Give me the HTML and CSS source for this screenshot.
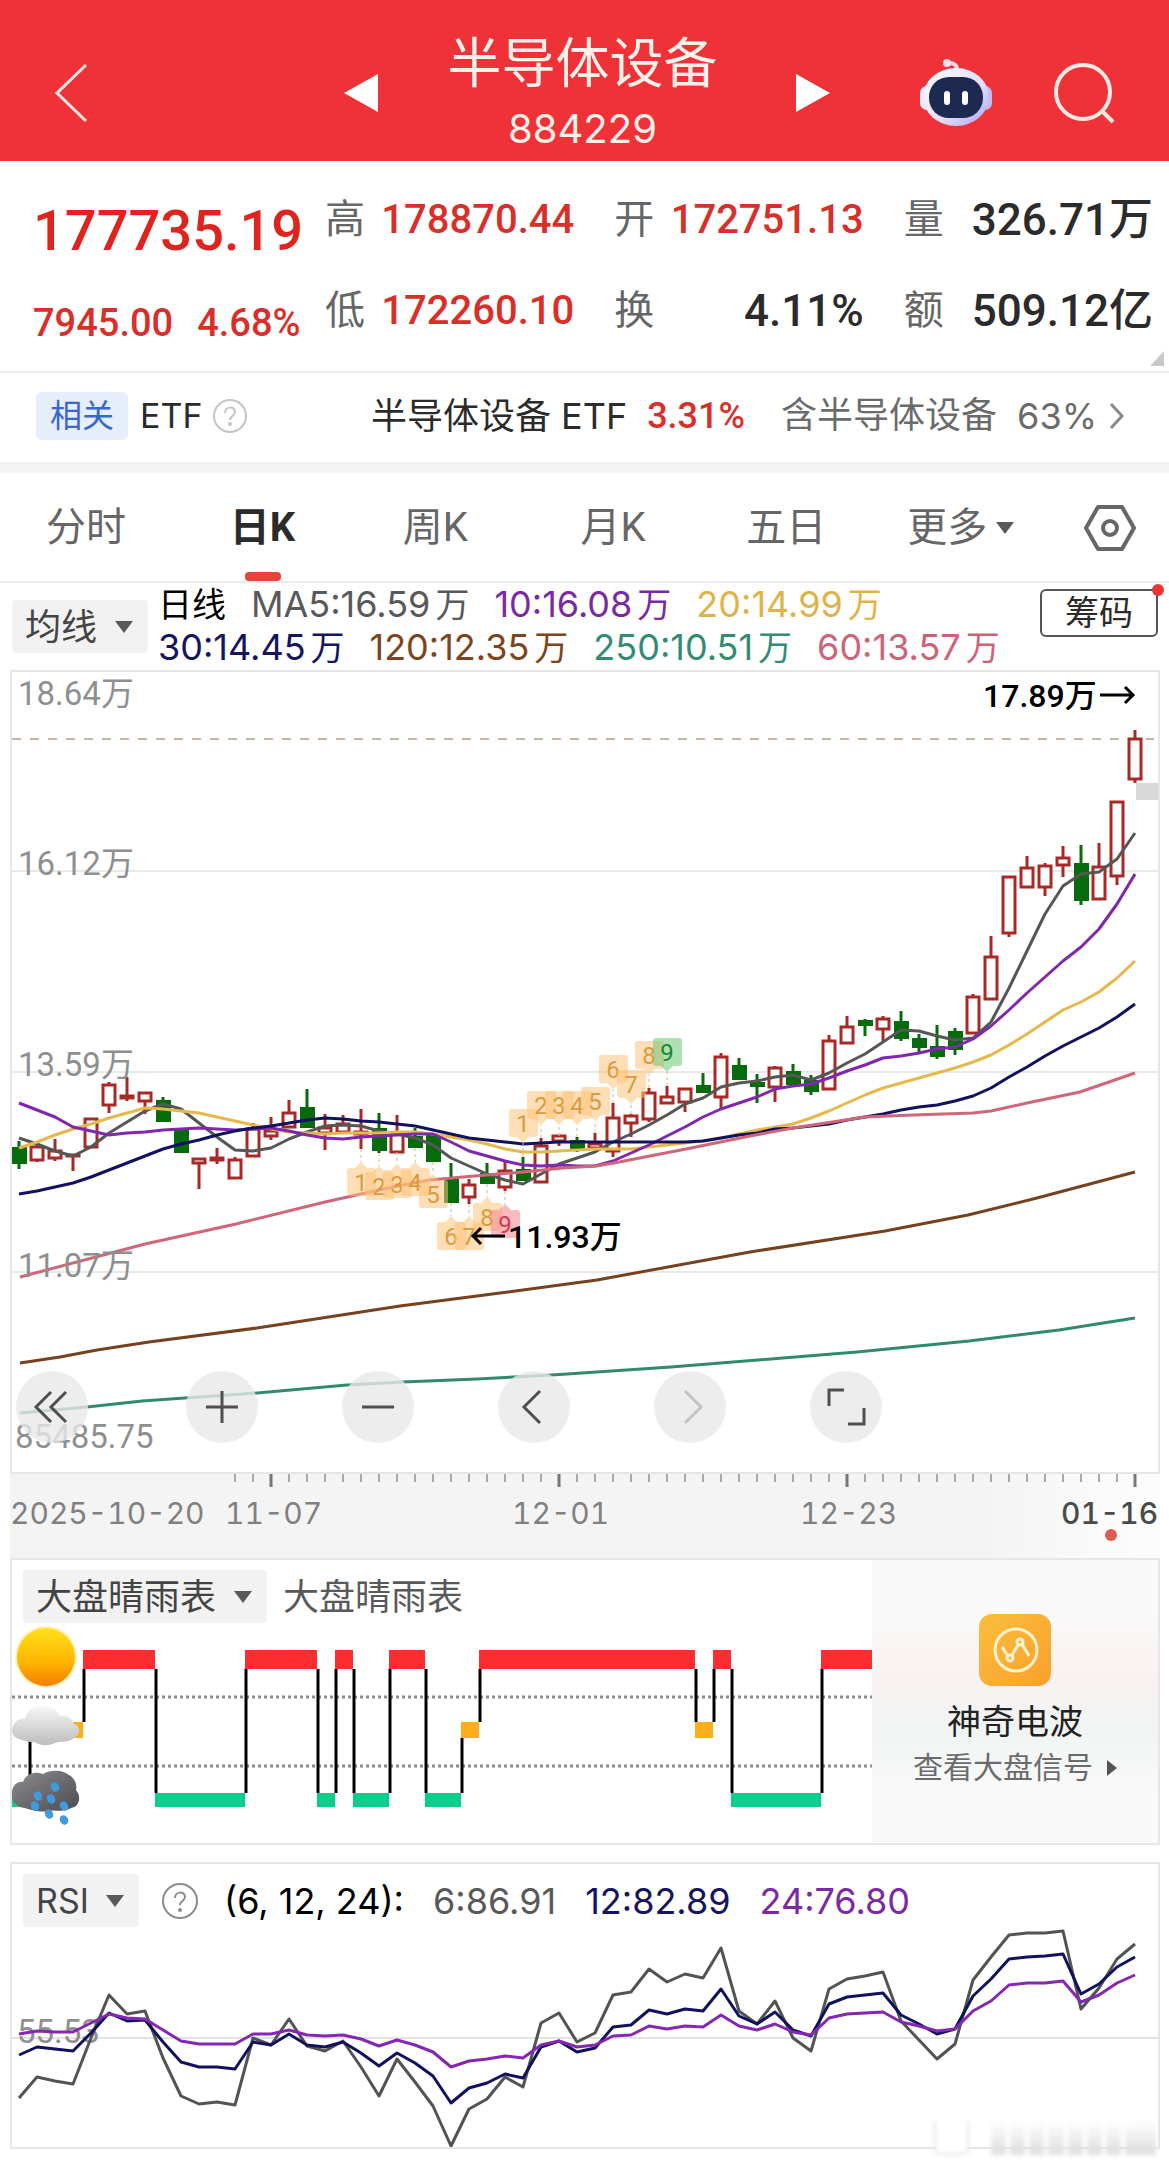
FILE: index.html
```html
<!DOCTYPE html>
<html lang="zh-CN">
<head>
    <meta charset="UTF-8">
    <meta name="viewport" content="width=device-width, initial-scale=1.0">
    <title>半导体设备 884229</title>
    <link rel="stylesheet" href="styles.css">
</head>
<body>

<header class="top-bar">
    <button class="icon-btn back-btn" aria-label="返回">
        <svg width="36" height="60" viewBox="0 0 36 60"><path d="M32 2 L3 30 L32 58" fill="none" stroke="#ffe9e2" stroke-width="3"/></svg>
    </button>
    <div class="switcher">
        <button class="icon-btn" aria-label="上一个">
            <svg width="34" height="38" viewBox="0 0 34 38"><path d="M34 0 V38 L0 19 Z" fill="#fff"/></svg>
        </button>
        <div class="title-block">
            <h1>半导体设备</h1>
            <p>884229</p>
        </div>
        <button class="icon-btn" aria-label="下一个">
            <svg width="34" height="38" viewBox="0 0 34 38"><path d="M0 0 V38 L34 19 Z" fill="#fff"/></svg>
        </button>
    </div>
    <div class="top-tools">
        <button class="icon-btn" aria-label="智能助手">
            <svg width="74" height="70" viewBox="0 0 74 70">
                <defs>
                    <linearGradient id="shell" x1="0" y1="0" x2="1" y2="1">
                        <stop offset="0" stop-color="#ffffff"/>
                        <stop offset="0.6" stop-color="#e3dcfb"/>
                        <stop offset="1" stop-color="#a9a0f4"/>
                    </linearGradient>
                </defs>
                <path d="M36 14 C40 9 37 5 29 5" fill="none" stroke="#f6d6e8" stroke-width="4"/>
                <circle cx="28" cy="5" r="4" fill="#fbdbe8"/>
                <rect x="1" y="28" width="14" height="24" rx="7" fill="#efe8fb"/>
                <rect x="59" y="28" width="14" height="24" rx="7" fill="#c3b9f6"/>
                <ellipse cx="37" cy="39" rx="33" ry="29" fill="url(#shell)"/>
                <rect x="10" y="19" width="54" height="41" rx="20" fill="#1b2a4e"/>
                <rect x="25" y="33" width="6" height="14" rx="3" fill="#fff"/>
                <rect x="43" y="33" width="6" height="14" rx="3" fill="#fff"/>
            </svg>
        </button>
        <button class="icon-btn" aria-label="搜索">
            <svg width="66" height="64" viewBox="0 0 66 64"><circle cx="30" cy="31" r="27" fill="none" stroke="#ffe9e2" stroke-width="4"/><path d="M48 49 L60 61" stroke="#ffe9e2" stroke-width="4"/></svg>
        </button>
    </div>
</header>

<section class="quote">
    <div class="quote-main">
        <div class="price">177735.19</div>
        <div class="change"><span>7945.00</span><span>4.68%</span></div>
    </div>
    <dl class="quote-grid">
        <div><dt>高</dt><dd class="up">178870.44</dd></div>
        <div><dt>开</dt><dd class="up">172751.13</dd></div>
        <div><dt>量</dt><dd>326.71万</dd></div>
        <div><dt>低</dt><dd class="up">172260.10</dd></div>
        <div><dt>换</dt><dd>4.11%</dd></div>
        <div><dt>额</dt><dd>509.12亿</dd></div>
    </dl>
    <span class="corner"></span>
</section>

<section class="related">
    <span class="tag">相关</span>
    <span class="etf">ETF</span>
    <svg class="help" width="36" height="36" viewBox="0 0 36 36"><circle cx="18" cy="18" r="16" fill="none" stroke="#c4c4c4" stroke-width="2"/><path d="M13 15 C13 8 23 8 23 14 C23 18 18 18 18 22" fill="none" stroke="#c4c4c4" stroke-width="2"/><circle cx="18" cy="26" r="2" fill="#c4c4c4"/></svg>
    <a class="fund" href="#">半导体设备 ETF</a>
    <span class="fund-pct">3.31%</span>
    <a class="holding" href="#">含半导体设备<span>63%</span>
        <svg width="16" height="28" viewBox="0 0 16 28"><path d="M2 2 L13 14 L2 26" fill="none" stroke="#888" stroke-width="3"/></svg>
    </a>
</section>

<nav class="tabs">
    <button>分时</button>
    <button class="active">日K</button>
    <button>周K</button>
    <button>月K</button>
    <button>五日</button>
    <button>更多<i class="caret small"></i></button>
    <button class="settings" aria-label="设置">
        <svg width="52" height="46" viewBox="0 0 52 46"><path d="M14 2 H38 L50 23 L38 44 H14 L2 23 Z" fill="none" stroke="#666" stroke-width="4" stroke-linejoin="round"/><circle cx="26" cy="23" r="7" fill="none" stroke="#666" stroke-width="4"/></svg>
    </button>
</nav>

<section class="legend">
    <label class="picker">
        <select aria-label="主图指标"><option>均线</option></select>
        <i class="caret"></i>
    </label>
    <div class="ma-list">
        <div class="ma-row">
            <span class="black day">日线</span>
            <span class="c5">MA5:16.59<b>万</b></span>
            <span class="c10">10:16.08<b>万</b></span>
            <span class="c20">20:14.99<b>万</b></span>
        </div>
        <div class="ma-row">
            <span class="c30">30:14.45<b>万</b></span>
            <span class="c120">120:12.35<b>万</b></span>
            <span class="c250">250:10.51<b>万</b></span>
            <span class="c60">60:13.57<b>万</b></span>
        </div>
    </div>
    <button class="chips">筹码</button>
</section>

<section class="panel k-panel">
    <svg id="kChart" viewBox="12 672 1146 800"></svg>
    <div class="k-tools">
        <button class="first" aria-label="最左"><svg width="40" height="40" viewBox="0 0 40 40"><path d="M19 5 L4 20 L19 35 M34 5 L19 20 L34 35"/></svg></button>
        <button aria-label="放大"><svg width="40" height="40" viewBox="0 0 40 40"><path d="M20 4 V36 M4 20 H36"/></svg></button>
        <button aria-label="缩小"><svg width="40" height="40" viewBox="0 0 40 40"><path d="M4 20 H36"/></svg></button>
        <button aria-label="左移"><svg width="40" height="40" viewBox="0 0 40 40"><path d="M26 4 L10 20 L26 36"/></svg></button>
        <button aria-label="右移" disabled><svg width="40" height="40" viewBox="0 0 40 40"><path d="M15 4 L31 20 L15 36"/></svg></button>
        <button aria-label="全屏"><svg width="40" height="40" viewBox="0 0 40 40"><path d="M3 19 V3 H18 M22 37 H38 V21"/></svg></button>
    </div>
</section>

<section class="date-axis">
    <svg id="dateAxis" viewBox="10 1474 1150 84"></svg>
</section>

<section class="panel weather">
    <div class="weather-main">
        <div class="panel-head">
            <label class="picker">
                <select aria-label="副图指标"><option>大盘晴雨表</option></select>
                <i class="caret"></i>
            </label>
            <span class="panel-name">大盘晴雨表</span>
        </div>
        <svg id="weatherChart" viewBox="12 1623 860 220">
            <defs>
                <linearGradient id="sun" x1="0" y1="0" x2="0" y2="1">
                    <stop offset="0" stop-color="#ffe11a"/>
                    <stop offset="0.6" stop-color="#ffb400"/>
                    <stop offset="1" stop-color="#f57c00"/>
                </linearGradient>
                <linearGradient id="cloud" x1="0" y1="0" x2="0" y2="1">
                    <stop offset="0" stop-color="#f7f7f7"/>
                    <stop offset="1" stop-color="#bdbdbd"/>
                </linearGradient>
                <linearGradient id="storm" x1="0" y1="0" x2="1" y2="1">
                    <stop offset="0" stop-color="#8d8d90"/>
                    <stop offset="1" stop-color="#4b4b50"/>
                </linearGradient>
            </defs>
            <g id="weatherBars"></g>
            <circle cx="46" cy="1657" r="31" fill="#ffe27a" opacity="0.5"/>
            <circle cx="46" cy="1657" r="29" fill="url(#sun)"/>
            <path d="M12 1731 C12 1722 19 1718 25 1719 C27 1708 38 1704 47 1707 C53 1707 58 1712 60 1716 C68 1715 73 1719 74 1724 C81 1725 81 1736 74 1738 C70 1743 58 1741 55 1743 C47 1747 38 1745 35 1742 C28 1743 22 1740 20 1739 C15 1738 12 1735 12 1731 Z" fill="url(#cloud)"/>
            <path d="M12 1796 C11 1786 17 1781 23 1782 C26 1773 36 1771 43 1774 C51 1769 63 1770 69 1775 C76 1779 77 1786 76 1790 C82 1797 79 1807 71 1808 C64 1813 53 1809 49 1811 C38 1813 29 1809 25 1808 C16 1807 12 1802 12 1796 Z" fill="url(#storm)"/>
            <g id="drops" fill="#3f9be0"></g>
        </svg>
    </div>
    <a class="wave-card" href="#">
        <svg width="72" height="72" viewBox="0 0 72 72">
            <defs>
                <linearGradient id="wave" x1="0" y1="0" x2="1" y2="1">
                    <stop offset="0" stop-color="#fbbe3c"/>
                    <stop offset="1" stop-color="#f9a02c"/>
                </linearGradient>
            </defs>
            <rect width="72" height="72" rx="13" fill="url(#wave)"/>
            <circle cx="37" cy="36" r="21" fill="none" stroke="#fff3cf" stroke-width="3"/>
            <path d="M23 33 L29 42 M33 41 L39 31 M43 30 L50 42" fill="none" stroke="#fff3cf" stroke-width="3"/>
            <circle cx="31" cy="44" r="3" fill="none" stroke="#fff3cf" stroke-width="3"/>
            <circle cx="41" cy="28" r="3" fill="none" stroke="#fff3cf" stroke-width="3"/>
        </svg>
        <strong>神奇电波</strong>
        <span>查看大盘信号<i class="caret-right"></i></span>
    </a>
</section>

<section class="panel rsi">
    <div class="panel-head">
        <label class="picker">
            <select aria-label="RSI指标"><option>RSI</option></select>
            <i class="caret"></i>
        </label>
        <svg class="rsi-help" width="38" height="38" viewBox="0 0 38 38"><circle cx="19" cy="19" r="17" fill="none" stroke="#8c8c8c" stroke-width="2"/><path d="M14 16 C14 9 24 9 24 15 C24 19 19 19 19 23" fill="none" stroke="#8c8c8c" stroke-width="2"/><circle cx="19" cy="28" r="2" fill="#8c8c8c"/></svg>
        <span class="black">(6, 12, 24):</span>
        <span class="c5">6:86.91</span>
        <span class="c30">12:82.89</span>
        <span class="c10">24:76.80</span>
    </div>
    <svg id="rsiChart" viewBox="12 1927 1146 220"></svg>
    <div class="watermark"><i></i><i></i><i></i><i></i><i></i><i></i><i></i><i></i><i></i></div>
</section>

<script src="script.js"></script>
</body>
</html>
```
FILE: styles.css
```css
* {
    box-sizing: border-box;
}
body {
    margin: 0;
    background: #fff;
    color: #2b2b2b;
    font-family: Roboto, "Noto Sans CJK SC", sans-serif;
}
h1, p, dl, dd {
    margin: 0;
}
button {
    border: none;
    background: none;
    padding: 0;
    font: inherit;
    color: inherit;
    cursor: pointer;
}
a {
    color: inherit;
    text-decoration: none;
}
svg {
    display: block;
}

/* header */
.top-bar {
    display: grid;
    grid-template-columns: 1fr auto 1fr;
    align-items: center;
    height: 161px;
    padding: 24px 50px 0 54px;
    background: #ee3237;
    color: #fff1ea;
}
.back-btn {
    justify-self: start;
}
.switcher {
    display: flex;
    align-items: center;
}
.title-block {
    margin: -4px 78px 0 70px;
    text-align: center;
}
.title-block h1 {
    font-size: 54px;
    line-height: 76px;
    font-weight: 400;
}
.title-block p {
    font-family: Inter, sans-serif;
    font-size: 40px;
    line-height: 52px;
}
.top-tools {
    display: flex;
    align-items: center;
    justify-content: flex-end;
    gap: 60px;
}

/* quote */
.quote {
    position: relative;
    display: flex;
    height: 212px;
    padding: 0 16px 0 33px;
    border-bottom: 2px solid #ededed;
}
.quote-main {
    width: 292px;
    padding-top: 24px;
    color: #e0231c;
    font-weight: 500;
}
.price {
    font-size: 56px;
    line-height: 92px;
}
.change {
    display: flex;
    gap: 24px;
    font-size: 38px;
    line-height: 92px;
    color: #d92f2b;
}
.quote-grid {
    flex: 1;
    display: grid;
    grid-template-columns: repeat(3, 1fr);
    grid-auto-rows: 91px;
    column-gap: 40px;
    padding-top: 13px;
}
.quote-grid div {
    display: flex;
    align-items: center;
    justify-content: space-between;
    line-height: 48px;
    white-space: nowrap;
}
.quote-grid dt {
    font-size: 40px;
    color: #666;
}
.quote-grid dd {
    font-size: 44px;
    font-weight: 500;
}
.quote-grid .up {
    font-size: 40px;
    color: #d92f2b;
}
.corner {
    position: absolute;
    right: 5px;
    bottom: 5px;
    border-left: 14px solid transparent;
    border-bottom: 15px solid #c9c9c9;
}

/* related etf */
.related {
    display: flex;
    align-items: center;
    height: 100px;
    padding: 0 44px 4px 36px;
    border-bottom: 11px solid #f4f4f5;
    font-size: 36px;
    line-height: 44px;
    white-space: nowrap;
}
.tag {
    padding: 0 14px;
    border-radius: 6px;
    background: #e6edfb;
    color: #3668cf;
    font-size: 32px;
    line-height: 48px;
}
.etf {
    margin-left: 12px;
    font-family: Inter, sans-serif;
    font-size: 34px;
}
.help {
    margin-left: 10px;
}
.fund {
    margin-left: auto;
    font-family: Inter, "Noto Sans CJK SC", sans-serif;
}
.fund-pct {
    margin-left: 20px;
    color: #d92f2b;
    font-weight: 500;
}
.holding {
    display: flex;
    align-items: center;
    margin-left: 36px;
    color: #6b6b6b;
}
.holding span {
    margin: 0 12px 0 20px;
    font-family: Inter, sans-serif;
    font-size: 36px;
}

/* tabs */
.tabs {
    display: grid;
    grid-template-columns: 184fr 173fr 178fr 166fr 161fr 177fr 52fr;
    height: 110px;
    padding: 2px 33px 0 46px;
    border-bottom: 2px solid #ededed;
    font-size: 40px;
    line-height: 48px;
    color: #666;
}
.tabs button {
    position: relative;
    justify-self: start;
    white-space: nowrap;
}
.tabs .active {
    color: #2b2b2b;
    font-weight: 700;
}
.tabs .active::after {
    content: "";
    position: absolute;
    left: 50%;
    bottom: 0;
    width: 36px;
    height: 9px;
    margin-left: -18px;
    border-radius: 4px;
    background: #e8433a;
}
.caret {
    display: inline-block;
    border: 9px solid transparent;
    border-top: 12px solid #595959;
    border-bottom: none;
    pointer-events: none;
}
.caret.small {
    margin-left: 9px;
    vertical-align: 7px;
}

/* legend */
.legend {
    display: flex;
    align-items: flex-start;
    height: 87px;
    padding: 0 11px 0 12px;
}
.picker {
    position: relative;
    display: block;
    border-radius: 4px;
    background: #f2f2f2;
}
.picker select {
    display: block;
    height: 53px;
    padding: 0 50px 0 13px;
    border: none;
    background: transparent;
    appearance: none;
    color: #444;
    font-family: Inter, "Noto Sans CJK SC", sans-serif;
    font-size: 36px;
}
.picker .caret {
    position: absolute;
    right: 15px;
    top: 21px;
}
.legend .picker {
    margin-top: 17px;
}
.ma-list {
    flex: 1;
    padding-left: 10px;
}
.ma-row {
    display: flex;
    gap: 25px;
    font-family: Inter, "Noto Sans CJK SC", sans-serif;
    font-size: 36px;
    line-height: 43px;
    white-space: nowrap;
}
.ma-row b {
    margin-left: 5px;
    font-size: 34px;
    font-weight: 400;
}
.ma-row .day {
    font-size: 34px;
}
.black { color: #000; }
.c5 { color: #595959; }
.c10 { color: #7a2aa5; }
.c20 { color: #dfb34b; }
.c30 { color: #14145f; }
.c60 { color: #cc6478; }
.c120 { color: #7a4520; }
.c250 { color: #348b73; }
.chips {
    position: relative;
    width: 118px;
    height: 48px;
    margin-top: 6px;
    border: 2px solid #555;
    border-radius: 6px;
    font-size: 34px;
    line-height: 42px;
}
.chips::after {
    content: "";
    position: absolute;
    right: -8px;
    top: -7px;
    width: 12px;
    height: 12px;
    border-radius: 50%;
    background: #e33;
}

/* chart panels */
.panel {
    position: relative;
    margin: 0 9px 0 10px;
    border: 2px solid #e6e6e6;
}
.panel > svg,
.weather-main > svg,
.date-axis > svg {
    width: 100%;
    height: auto;
}
.k-tools {
    position: absolute;
    left: 4px;
    bottom: 29px;
    display: flex;
    gap: 84px;
}
.k-tools button {
    display: flex;
    align-items: center;
    justify-content: center;
    width: 72px;
    height: 72px;
    border-radius: 50%;
    background: rgba(232, 232, 232, 0.8);
}
.k-tools .first {
    margin-right: 14px;
}
.k-tools path {
    fill: none;
    stroke: #4f4f4f;
    stroke-width: 3;
}
.k-tools button:disabled path {
    stroke: #c4c4c4;
}
.date-axis {
    margin: 0 9px 0 10px;
    background: linear-gradient(to right, #f4f4f4 85%, #fdfdfd);
}
.panel-head {
    display: flex;
    align-items: center;
    height: 63px;
    padding: 10px 11px 0;
    font-family: Inter, "Noto Sans CJK SC", sans-serif;
    font-size: 36px;
    white-space: nowrap;
}
.panel-name {
    margin-left: 16px;
    line-height: 48px;
    color: #595959;
}
.weather {
    display: flex;
}
.weather-main {
    flex: 1;
}
.wave-card {
    display: flex;
    flex-direction: column;
    align-items: center;
    width: 286px;
    padding-top: 54px;
    background: linear-gradient(#f9f9f9 20%, #fbf1f1 40%, #f0f4f3 60%, #f9f9f9 80%);
}
.wave-card strong {
    margin-top: 12px;
    font-size: 34px;
    line-height: 48px;
    font-weight: 400;
    color: #222;
}
.wave-card span {
    display: flex;
    align-items: center;
    font-size: 30px;
    line-height: 44px;
    color: #6b6b6b;
}
.caret-right {
    margin-left: 14px;
    border: 8px solid transparent;
    border-left: 10px solid #555;
    border-right: none;
}
.rsi {
    margin-top: 17px;
    margin-bottom: 19px;
}
.rsi .picker select {
    font-size: 34px;
}
.rsi-help {
    margin: 0 25px 0 22px;
}
.rsi .panel-head .c5,
.rsi .panel-head .c30,
.rsi .panel-head .c10 {
    margin-left: 29px;
}
.watermark {
    position: absolute;
    right: 2px;
    bottom: -8px;
    display: flex;
    gap: 4px;
    width: 222px;
    height: 34px;
    filter: blur(2px);
}
.watermark i {
    flex: 1;
    background: linear-gradient(rgba(255, 255, 255, 0.6), #dedede);
}
.watermark i:first-child {
    flex: 2;
    margin-right: 18px;
    border: 2px solid #e2e2e2;
    border-top: none;
    border-radius: 0 0 6px 6px;
    background: #fff;
}
.watermark i:last-child {
    flex: 2;
}

/* svg text */
.axis-label {
    fill: #8f8f8f;
    font-family: Roboto, "Noto Sans CJK SC", sans-serif;
    font-size: 33px;
}
.peak-label {
    fill: #000;
    font-family: Roboto, "Noto Sans CJK SC", sans-serif;
    font-size: 32px;
    font-weight: 500;
}
.date-label {
    fill: #808080;
    font-family: Inter, sans-serif;
    font-size: 30px;
    font-variant-numeric: tabular-nums;
}
.date-label.current {
    fill: #4a4a4a;
    font-weight: 500;
}
.td-label {
    font-family: Roboto, sans-serif;
    font-size: 24px;
    text-anchor: middle;
}
```
FILE: script.js
```js
var NS = 'http://www.w3.org/2000/svg';
var STEP = 18;
var LEFT = 19;

function xAt(i) {
    return LEFT + STEP * i;
}

function add(parent, tag, attrs, text) {
    var el = document.createElementNS(NS, tag);
    for (var key in attrs) {
        el.setAttribute(key, attrs[key]);
    }
    if (text) el.textContent = text;
    parent.appendChild(el);
    return el;
}

function drawLine(svg, points, color, width) {
    add(svg, 'polyline', {
        points: points.map(function (p) { return p.join(','); }).join(' '),
        fill: 'none', stroke: color, 'stroke-width': width, 'stroke-linejoin': 'round'
    });
}

function drawSeries(svg, values, color, width) {
    drawLine(svg, values.map(function (v, i) { return [xAt(i), v]; }), color, width);
}

// [direction, body top, body bottom, high, low]
var candles = [
    ['g',1147,1164,1141,1169], ['r',1147,1160,1145,1162], ['r',1151,1158,1139,1161], ['r',1155,1156,1154,1171],
    ['r',1119,1147,1119,1147], ['r',1085,1105,1082,1113], ['r',1096,1098,1077,1101], ['r',1093,1101,1092,1114],
    ['g',1100,1122,1097,1122], ['g',1129,1153,1129,1153], ['r',1159,1163,1159,1189], ['r',1158,1160,1148,1164],
    ['r',1160,1178,1157,1178], ['r',1129,1156,1123,1156], ['r',1131,1136,1117,1140], ['r',1113,1127,1100,1127],
    ['g',1107,1128,1089,1128], ['r',1128,1133,1114,1150], ['r',1124,1132,1115,1132], ['r',1132,1134,1109,1149],
    ['g',1128,1151,1113,1153], ['r',1133,1152,1115,1152], ['g',1136,1148,1128,1148], ['g',1134,1162,1134,1162],
    ['g',1179,1203,1163,1203], ['r',1185,1197,1179,1204], ['g',1173,1184,1163,1184], ['r',1171,1187,1160,1191],
    ['g',1169,1181,1157,1181], ['r',1146,1182,1138,1183], ['r',1136,1141,1136,1146], ['g',1140,1149,1137,1152],
    ['r',1144,1148,1133,1148], ['r',1118,1151,1103,1157], ['r',1116,1123,1114,1137], ['r',1093,1119,1088,1122],
    ['r',1097,1103,1086,1103], ['r',1089,1102,1088,1112], ['g',1085,1093,1073,1093], ['r',1057,1097,1053,1109],
    ['g',1065,1080,1058,1080], ['g',1082,1087,1074,1103], ['r',1068,1087,1066,1102], ['g',1071,1085,1064,1085],
    ['g',1080,1092,1075,1095], ['r',1041,1089,1035,1089], ['r',1027,1043,1016,1043], ['g',1020,1026,1019,1036],
    ['r',1019,1029,1016,1041], ['g',1021,1039,1011,1041], ['g',1038,1048,1034,1053], ['g',1046,1057,1025,1059],
    ['g',1031,1050,1028,1055], ['r',997,1033,994,1033], ['r',957,999,936,999], ['r',877,933,876,937],
    ['r',868,887,856,887], ['r',866,887,863,896], ['r',858,865,846,877], ['g',863,901,845,905],
    ['r',867,899,843,899], ['r',802,876,801,885], ['r',739,779,730,783]
];

var ma5 = [1138,1144,1151,1156,1147,1133,1122,1111,1104,1109,1123,1137,1150,1151,1148,1139,1132,1126,1125,1126,1131,
    1134,1138,1145,1158,1166,1174,1180,1184,1174,1164,1158,1152,1142,1134,1125,1115,1104,1098,1087,1083,1081,
    1077,1075,1080,1073,1063,1054,1042,1030,1031,1036,1040,1038,1022,988,951,914,886,874,872,859,833];
var ma10 = [1103,1110,1117,1127,1131,1135,1133,1132,1130,1129,1128,1129,1130,1129,1128,1131,1135,1138,1139,1137,1136,
    1135,1134,1134,1142,1151,1156,1161,1165,1166,1165,1166,1166,1161,1153,1145,1136,1127,1117,1109,1103,1097,
    1089,1086,1084,1078,1071,1065,1058,1056,1053,1049,1047,1039,1026,1010,993,977,961,947,929,904,874];
var ma20 = [1148,1142,1135,1129,1124,1118,1113,1108,1109,1111,1113,1117,1121,1125,1129,1132,1133,1134,1133,1133,1133,
    1132,1132,1134,1137,1140,1144,1149,1152,1152,1151,1150,1149,1149,1149,1147,1145,1143,1141,1138,1134,1130,
    1127,1124,1118,1111,1103,1095,1088,1083,1078,1073,1068,1062,1055,1045,1034,1022,1010,1002,992,978,961];
var ma30 = [1194,1191,1187,1183,1177,1170,1163,1156,1149,1144,1140,1135,1131,1128,1126,1123,1120,1118,1119,1121,1122,
    1124,1126,1130,1134,1138,1140,1142,1144,1143,1142,1142,1142,1142,1142,1142,1142,1142,1141,1138,1135,1133,
    1129,1128,1126,1124,1120,1117,1114,1110,1107,1105,1101,1096,1088,1077,1067,1056,1046,1037,1028,1017,1004];
var ma60 = [[20,1277],[145,1244],[236,1224],[325,1202],[397,1186],[430,1180],[463,1177],[523,1172],[563,1168],[596,1166],
    [614,1163],[686,1149],[750,1136],[793,1128],[865,1117],[913,1115],[973,1113],[991,1111],[1027,1103],[1080,1092],[1135,1073]];
var ma120 = [[20,1363],[60,1357],[97,1350],[149,1342],[257,1328],[400,1306],[500,1293],[597,1280],[750,1252],[885,1231],
    [968,1215],[1037,1198],[1135,1172]];
var ma250 = [[20,1413],[87,1407],[142,1401],[257,1393],[347,1385],[403,1382],[477,1379],[552,1375],[671,1367],[783,1358],
    [857,1352],[969,1341],[1059,1330],[1135,1318]];

// nine-count markers: [candle index, count, box centre, side, kind]
var marks = [
    [19,1,1182,'low'], [20,2,1186,'low'], [21,3,1184,'low'], [22,4,1182,'low'], [23,5,1194,'low'],
    [24,6,1236,'low'], [25,7,1236,'low'], [26,8,1217,'low'], [27,9,1224,'low','buy'],
    [28,1,1123,'high'], [29,2,1105,'high'], [30,3,1105,'high'], [31,4,1105,'high'], [32,5,1101,'high'],
    [33,6,1069,'high'], [34,7,1084,'high'], [35,8,1055,'high'], [36,9,1052,'high','sell']
];

function drawK() {
    var svg = document.getElementById('kChart');
    [871, 1072, 1272].forEach(function (y) {
        add(svg, 'line', {x1: 12, x2: 1158, y1: y, y2: y, stroke: '#e9e9e9', 'stroke-width': 2});
    });
    add(svg, 'line', {x1: 12, x2: 1154, y1: 739, y2: 739, stroke: '#c9b3a3', 'stroke-width': 2, 'stroke-dasharray': '9 9'});
    add(svg, 'rect', {x: 1136, y: 783, width: 24, height: 17, fill: '#d9d9d9'});

    candles.forEach(function (c, i) {
        var x = xAt(i);
        var color = c[0] === 'r' ? '#a82a28' : '#066b0a';
        if (c[3] < c[1]) add(svg, 'line', {x1: x, x2: x, y1: c[3], y2: c[1], stroke: color, 'stroke-width': 3});
        if (c[4] > c[2]) add(svg, 'line', {x1: x, x2: x, y1: c[2], y2: c[4], stroke: color, 'stroke-width': 3});
        add(svg, 'rect', {
            x: x - (c[0] === 'r' ? 6 : 7), y: c[1], width: c[0] === 'r' ? 12 : 15, height: c[2] - c[1],
            fill: c[0] === 'r' ? '#fff' : color, stroke: color, 'stroke-width': c[0] === 'r' ? 3 : 0
        });
    });

    drawSeries(svg, ma5, '#555755', 3);
    drawSeries(svg, ma20, '#e5b94d', 3);
    drawSeries(svg, ma10, '#7f27ae', 3);
    drawSeries(svg, ma30, '#111160', 3);
    drawLine(svg, ma60, '#d0667a', 3);
    drawLine(svg, ma120, '#74421f', 3);
    drawLine(svg, ma250, '#318a70', 3);

    marks.forEach(function (m) {
        var x = xAt(m[0]);
        var cy = m[2];
        var low = m[3] === 'low';
        var fill = m[4] === 'buy' ? '#f5838c' : m[4] === 'sell' ? '#6cc777' : '#fdc27a';
        var ink = m[4] === 'buy' ? '#d8394d' : m[4] === 'sell' ? '#168a2c' : '#dc9a3c';
        var edge = low ? cy - 14 : cy + 14;
        var tip = low ? edge - 6 : edge + 6;
        var end = low ? candles[m[0]][4] : candles[m[0]][3];
        add(svg, 'line', {x1: x, x2: x, y1: end, y2: tip, stroke: '#d8b48c', 'stroke-width': 1, 'stroke-dasharray': '3 3'});
        add(svg, 'rect', {x: x - 14, y: cy - 14, width: 29, height: 28, rx: 3, fill: fill, opacity: 0.55});
        add(svg, 'path', {d: 'M' + (x - 6) + ' ' + edge + 'L' + x + ' ' + tip + 'L' + (x + 6) + ' ' + edge + 'Z', fill: fill, opacity: 0.55});
        add(svg, 'text', {x: x, y: cy + 9, 'class': 'td-label', fill: ink}, String(m[1]));
    });

    add(svg, 'text', {x: 18, y: 705, 'class': 'axis-label'}, '18.64万');
    add(svg, 'text', {x: 18, y: 875, 'class': 'axis-label'}, '16.12万');
    add(svg, 'text', {x: 18, y: 1076, 'class': 'axis-label'}, '13.59万');
    add(svg, 'text', {x: 18, y: 1277, 'class': 'axis-label'}, '11.07万');
    add(svg, 'text', {x: 15, y: 1448, 'class': 'axis-label'}, '85485.75');

    add(svg, 'text', {x: 508, y: 1248, 'class': 'peak-label'}, '11.93万');
    add(svg, 'path', {d: 'M505 1236 H473 M481 1228 L473 1236 L481 1244', fill: 'none', stroke: '#000', 'stroke-width': 3});
    add(svg, 'text', {x: 983, y: 707, 'class': 'peak-label'}, '17.89万');
    add(svg, 'path', {d: 'M1100 695 H1133 M1125 687 L1133 695 L1125 703', fill: 'none', stroke: '#000', 'stroke-width': 3});
}

function drawDates() {
    var svg = document.getElementById('dateAxis');
    for (var i = 12; i < 63; i++) {
        var major = (i - 14) % 16 === 0;
        add(svg, 'line', {
            x1: xAt(i), x2: xAt(i), y1: 1474, y2: major ? 1487 : 1482,
            stroke: major ? '#777' : '#aaa', 'stroke-width': major ? 3 : 2
        });
    }
    add(svg, 'text', {x: 10, y: 1524, 'class': 'date-label'}, '2025-10-20');
    add(svg, 'text', {x: 225, y: 1524, 'class': 'date-label'}, '11-07');
    add(svg, 'text', {x: 512, y: 1524, 'class': 'date-label'}, '12-01');
    add(svg, 'text', {x: 800, y: 1524, 'class': 'date-label'}, '12-23');
    add(svg, 'text', {x: 1061, y: 1524, 'class': 'date-label current'}, '01-16');
    add(svg, 'circle', {cx: 1111, cy: 1535, r: 6, fill: '#e05a55'});
}

// market state: [from, to, state]
var states = [
    [11,30,'rain'], [30,84,'cloud'], [84,156,'sun'], [156,246,'rain'], [246,318,'sun'], [318,336,'rain'],
    [336,354,'sun'], [354,390,'rain'], [390,426,'sun'], [426,462,'rain'], [462,480,'cloud'], [480,696,'sun'],
    [696,714,'cloud'], [714,732,'sun'], [732,822,'rain'], [822,873,'sun']
];
var bands = {
    sun: {top: 1650, bottom: 1669, color: '#fb2d2f'},
    cloud: {top: 1722, bottom: 1738, color: '#fbae17'},
    rain: {top: 1793, bottom: 1807, color: '#08d08b'}
};

function drawWeather() {
    var g = document.getElementById('weatherBars');
    [1697, 1766].forEach(function (y) {
        add(g, 'line', {x1: 12, x2: 872, y1: y, y2: y, stroke: '#8c8c8c', 'stroke-width': 3, 'stroke-dasharray': '3 3'});
    });
    states.forEach(function (s, i) {
        var band = bands[s[2]];
        add(g, 'rect', {x: s[0] - 1, y: band.top, width: s[1] - s[0], height: band.bottom - band.top, fill: band.color});
        if (i > 0) {
            var prev = bands[states[i - 1][2]];
            var upper = prev.top < band.top ? prev : band;
            var lower = upper === prev ? band : prev;
            add(g, 'line', {x1: s[0], x2: s[0], y1: upper.bottom, y2: lower.top, stroke: '#000', 'stroke-width': 3});
        }
    });
    var drops = document.getElementById('drops');
    [[55,1787], [38,1796], [51,1799], [35,1806], [64,1806], [49,1814], [64,1820]].forEach(function (d) {
        add(drops, 'ellipse', {cx: d[0], cy: d[1], rx: 4, ry: 5, transform: 'rotate(-30 ' + d[0] + ' ' + d[1] + ')'});
    });
}

var rsi6 = [2098,2077,2081,2084,2038,1995,2014,2011,2058,2096,2104,2102,2105,2038,2045,2019,2046,2051,2041,2067,2096,
    2059,2082,2106,2146,2109,2099,2077,2087,2023,2013,2042,2033,1995,1992,1969,1982,1974,1978,1948,2011,2024,
    2001,2038,2051,1989,1979,1976,1972,2021,2040,2059,2044,1980,1957,1935,1933,1933,1931,2009,1988,1959,1944];
var rsi12 = [2055,2047,2049,2051,2033,2013,2021,2020,2042,2062,2067,2067,2069,2042,2045,2034,2045,2047,2042,2053,2066,
    2053,2063,2076,2103,2088,2083,2074,2078,2047,2041,2052,2048,2027,2025,2010,2014,2009,2011,1989,2016,2024,
    2012,2030,2036,2004,1997,1995,1993,2015,2024,2034,2029,1996,1979,1959,1957,1956,1954,1994,1984,1967,1957];
var rsi24 = [2034,2031,2032,2032,2023,2014,2018,2019,2030,2041,2044,2044,2044,2034,2034,2030,2035,2036,2035,2039,2046,
    2040,2045,2052,2067,2061,2059,2056,2058,2045,2041,2047,2045,2036,2035,2026,2029,2026,2027,2015,2026,2030,
    2024,2032,2035,2018,2014,2013,2012,2022,2026,2031,2029,2011,2001,1985,1983,1983,1981,2002,1995,1983,1975];

function drawRsi() {
    var svg = document.getElementById('rsiChart');
    add(svg, 'line', {x1: 12, x2: 1158, y1: 2038, y2: 2038, stroke: '#e3e3e3', 'stroke-width': 2});
    add(svg, 'text', {x: 17, y: 2043, 'class': 'axis-label'}, '55.53');
    drawSeries(svg, rsi6, '#525452', 3);
    drawSeries(svg, rsi12, '#111160', 3);
    drawSeries(svg, rsi24, '#8427b2', 3);
}

drawK();
drawDates();
drawWeather();
drawRsi();
```
